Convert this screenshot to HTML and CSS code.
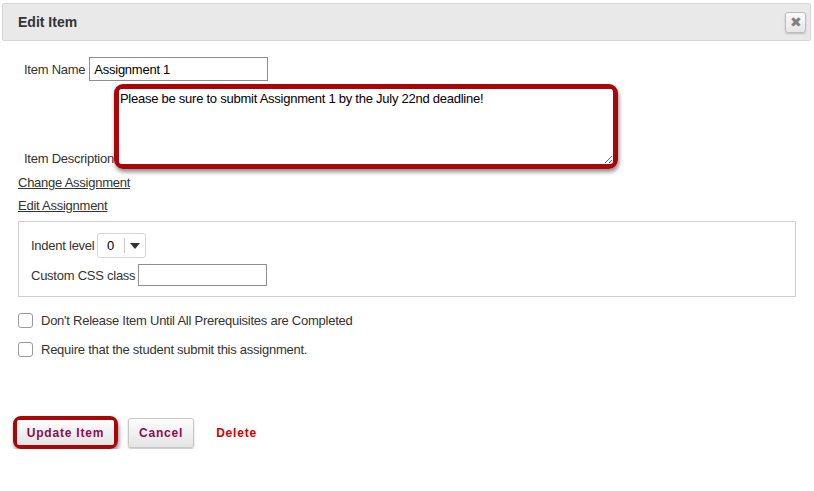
FILE: index.html
```html
<!DOCTYPE html>
<html lang="en">
<head>
    <meta charset="UTF-8">
    <meta name="viewport" content="width=device-width, initial-scale=1.0">
    <title>Edit Item</title>
    <link rel="stylesheet" href="styles.css">
</head>
<body>
    <div class="dialog-header">
        <h2>Edit Item</h2>
        <button type="button" class="close-btn" title="Close">&#10006;</button>
    </div>
    <form class="edit-form">
        <div class="form-row name-row">
            <label for="itemName">Item Name</label>
            <input type="text" id="itemName" class="text-input name-input" value="Assignment 1">
        </div>
        <div class="form-row desc-row">
            <label for="itemDesc">Item Description</label>
            <span class="highlight desc-highlight">
                <textarea id="itemDesc">Please be sure to submit Assignment 1 by the July 22nd deadline!</textarea>
            </span>
        </div>
        <a href="#" class="form-link first-link">Change Assignment</a>
        <a href="#" class="form-link">Edit Assignment</a>
        <div class="options-box">
            <div class="form-row indent-row">
                <label>Indent level</label>
                <div class="fake-select">
                    <span class="select-value">0</span>
                    <span class="select-arrow"></span>
                </div>
            </div>
            <div class="form-row css-row">
                <label for="cssClass">Custom CSS class</label>
                <input type="text" id="cssClass" class="text-input css-input">
            </div>
        </div>
        <div class="check-row first-check">
            <input type="checkbox" id="prereq">
            <label for="prereq">Don't Release Item Until All Prerequisites are Completed</label>
        </div>
        <div class="check-row">
            <input type="checkbox" id="require">
            <label for="require">Require that the student submit this assignment.</label>
        </div>
        <div class="button-row">
            <span class="highlight btn-highlight">
                <button type="submit" class="btn btn-primary">Update Item</button>
            </span>
            <button type="button" class="btn">Cancel</button>
            <a href="#" class="delete-link">Delete</a>
        </div>
    </form>
</body>
</html>
```

FILE: styles.css
```css
body {
    font-family: Arial, "Liberation Sans", sans-serif;
    font-size: 13px;
    letter-spacing: -0.25px;
    color: #333;
    margin: 0;
    background: #fff;
}
.dialog-header {
    display: flex;
    align-items: center;
    justify-content: space-between;
    height: 36px;
    margin: 3px 3px 0 2px;
    padding: 0 4px 0 15px;
    background: #e9e9e9;
    border: 1px solid #d6d6d6;
    border-radius: 2px;
}
.dialog-header h2 {
    margin: 0;
    font-size: 14px;
    font-weight: bold;
    letter-spacing: 0;
    color: #333;
}
.close-btn {
    width: 21px;
    height: 21px;
    padding: 0;
    font-size: 14px;
    line-height: 19px;
    color: #808080;
    background: linear-gradient(#fafafa, #e6e6e6);
    border: 1px solid #bdbdbd;
    border-radius: 3px;
    box-shadow: 0 1px 2px rgba(0,0,0,0.2);
    cursor: pointer;
}
.edit-form {
    padding: 0 18px;
}
.form-row {
    display: flex;
    align-items: center;
}
.form-row label {
    margin-right: 4px;
}
.name-row {
    margin-top: 16px;
    padding-left: 6px;
}
.text-input {
    font-family: Arial, "Liberation Sans", sans-serif;
    font-size: 13px;
    letter-spacing: -0.25px;
    color: #000;
    border: 1px solid #8f8f8f;
    padding: 0 4px;
    box-sizing: border-box;
    margin: 0;
}
.name-input {
    width: 179px;
    height: 24px;
}
.desc-row {
    margin-top: 3px;
    padding-left: 6px;
    align-items: flex-end;
}
.desc-row label {
    margin: 0 0 3px 0;
}
.highlight {
    display: inline-block;
    border: 5px solid #a80608;
    border-radius: 9px;
    box-shadow: 1px 3px 4px rgba(0,0,0,0.45);
}
.desc-highlight {
    line-height: 0;
}
textarea {
    width: 494px;
    height: 75px;
    margin: 0;
    padding: 2px 1px;
    border: none;
    box-sizing: border-box;
    font-family: Arial, "Liberation Sans", sans-serif;
    font-size: 13px;
    letter-spacing: -0.25px;
    line-height: 15px;
    color: #000;
    outline: none;
    border-radius: 3px;
}
.form-link {
    display: block;
    width: max-content;
    color: #333;
    line-height: 16px;
    margin-top: 7px;
}
.first-link {
    margin-top: 6px;
}
.options-box {
    margin-top: 7px;
    border: 1px solid #cfcfcf;
    padding: 11px 12px 10px;
}
.indent-row label {
    margin-right: 2px;
}
.fake-select {
    display: flex;
    align-items: center;
    width: 49px;
    height: 25px;
    box-sizing: border-box;
    border: 1px solid #d4d4d4;
    border-radius: 3px;
    color: #000;
}
.select-value {
    width: 26px;
    text-align: center;
    border-right: 1px solid #ccc;
    line-height: 15px;
}
.select-arrow {
    width: 0;
    height: 0;
    margin-left: 5px;
    border-left: 5px solid transparent;
    border-right: 5px solid transparent;
    border-top: 6px solid #333;
}
.css-row {
    margin-top: 6px;
}
.css-row label {
    margin-right: 3px;
}
.css-input {
    width: 129px;
    height: 22px;
}
.check-row {
    display: flex;
    align-items: center;
    margin-top: 14px;
}
.first-check {
    margin-top: 16px;
}
.check-row input {
    appearance: none;
    width: 15px;
    height: 15px;
    margin: 0 8px 0 0;
    border: 1px solid #9a9a9a;
    border-radius: 3px;
    background: #fff;
}
.button-row {
    display: flex;
    align-items: center;
    margin-top: 59px;
    margin-left: -5px;
}
.btn {
    height: 30px;
    padding: 0 10px;
    font-family: Arial, "Liberation Sans", sans-serif;
    font-size: 12px;
    font-weight: bold;
    letter-spacing: 0.8px;
    color: #8c0c50;
    background: linear-gradient(#fdfdfd, #e4e4e4);
    border: 1px solid #c8c8c8;
    border-radius: 3px;
    box-shadow: 0 1px 2px rgba(0,0,0,0.25);
    cursor: pointer;
}
.btn-highlight {
    border-width: 4px;
    border-radius: 8px;
    line-height: 0;
    margin-right: 10px;
}
.btn-primary {
    width: 97px;
    height: 25px;
    border: none;
    border-radius: 2px;
    box-shadow: none;
    padding: 0;
}
.delete-link {
    margin-left: 22px;
    font-size: 12px;
    font-weight: bold;
    letter-spacing: 0.8px;
    color: #cc0000;
    text-decoration: none;
}
```
